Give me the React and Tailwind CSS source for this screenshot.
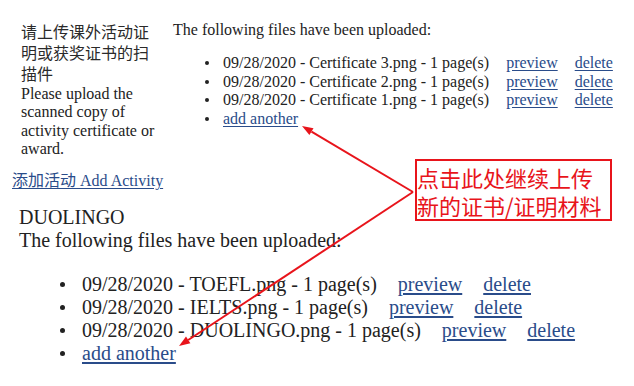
import React from "react";

const serif = { fontFamily: '"Liberation Serif", "Noto Sans CJK SC", serif' };
const cjk = { fontFamily: '"Noto Sans CJK SC", "Liberation Sans", sans-serif' };

const topFiles = ["Certificate 3.png", "Certificate 2.png", "Certificate 1.png"];
const bottomFiles = ["TOEFL.png", "IELTS.png", "DUOLINGO.png"];

function Link({ children, className = "" }) {
  return (
    <a href="#" className={"text-[#2a4c8a] underline underline-offset-2 " + className}>
      {children}
    </a>
  );
}

const topDot =
  "relative before:content-[''] before:absolute before:left-[-18px] before:top-[7px] before:w-[4px] before:h-[4px] before:rounded-full before:bg-[#222]";
const bottomDot =
  "relative before:content-[''] before:absolute before:left-[-22px] before:top-[9px] before:w-[5px] before:h-[5px] before:rounded-full before:bg-[#222]";

export default function App() {
  return (
    <div className="relative w-[634px] h-[386px] bg-white overflow-hidden text-[#222]" style={serif}>
      <div className="flex pt-[21px]">
        <div className="ml-[21px] w-[140px]">
          <div className="text-[16px] leading-[21px] text-[#2a2a2a]" style={cjk}>
            请上传课外活动证明或获奖证书的扫描件
          </div>
          <div className="text-[16px] leading-[18.4px] mt-px">
            Please upload the scanned copy of activity certificate or award.
          </div>
        </div>
        <div className="ml-[12px]">
          <div className="text-[16px] leading-[18.4px]">The following files have been uploaded:</div>
          <ul className="mt-[15px] pl-[50px] list-none text-[16px] leading-[18.4px]">
            {topFiles.map((f) => (
              <li key={f} className={topDot}>
                09/28/2020 - {f} - 1 page(s)
                <Link className="ml-[17px]">preview</Link>
                <Link className="ml-[17px]">delete</Link>
              </li>
            ))}
            <li className={topDot}>
              <Link>add another</Link>
            </li>
          </ul>
        </div>
      </div>

      <div className="ml-[12px] mt-[11px] text-[16px] leading-[18px]">
        <Link>
          <span style={cjk}>添加活动</span> Add Activity
        </Link>
      </div>

      <div className="ml-[19px] mt-[16px] text-[20px] leading-[23px]">
        <div>DUOLINGO</div>
        <div>The following files have been uploaded:</div>
        <ul className="mt-[21px] pl-[63px] list-none">
          {bottomFiles.map((f) => (
            <li key={f} className={bottomDot}>
              09/28/2020 - {f} - 1 page(s)
              <Link className="ml-[21px]">preview</Link>
              <Link className="ml-[21px]">delete</Link>
            </li>
          ))}
          <li className={bottomDot}>
            <Link>add another</Link>
          </li>
        </ul>
      </div>

      <svg className="absolute left-0 top-0 pointer-events-none" width="634" height="386">
        <line x1="413" y1="192" x2="311.5" y2="131.6" stroke="#e8141b" strokeWidth="2" />
        <polygon points="302,126 313.5,128.2 309.4,135.1" fill="#e8141b" />
        <line x1="413" y1="192" x2="188.2" y2="340" stroke="#e8141b" strokeWidth="2" />
        <polygon points="179,346 190.4,343.3 186,336.6" fill="#e8141b" />
      </svg>

      <div
        className="absolute left-[415px] top-[159px] w-[197px] h-[62px] border-2 border-[#e8141b] pt-[2px] text-[22px] leading-[28px] text-[#e8141b]"
        style={cjk}
      >
        <div className="whitespace-nowrap">点击此处继续上传</div>
        <div className="whitespace-nowrap">新的证书/证明材料</div>
      </div>
    </div>
  );
}
